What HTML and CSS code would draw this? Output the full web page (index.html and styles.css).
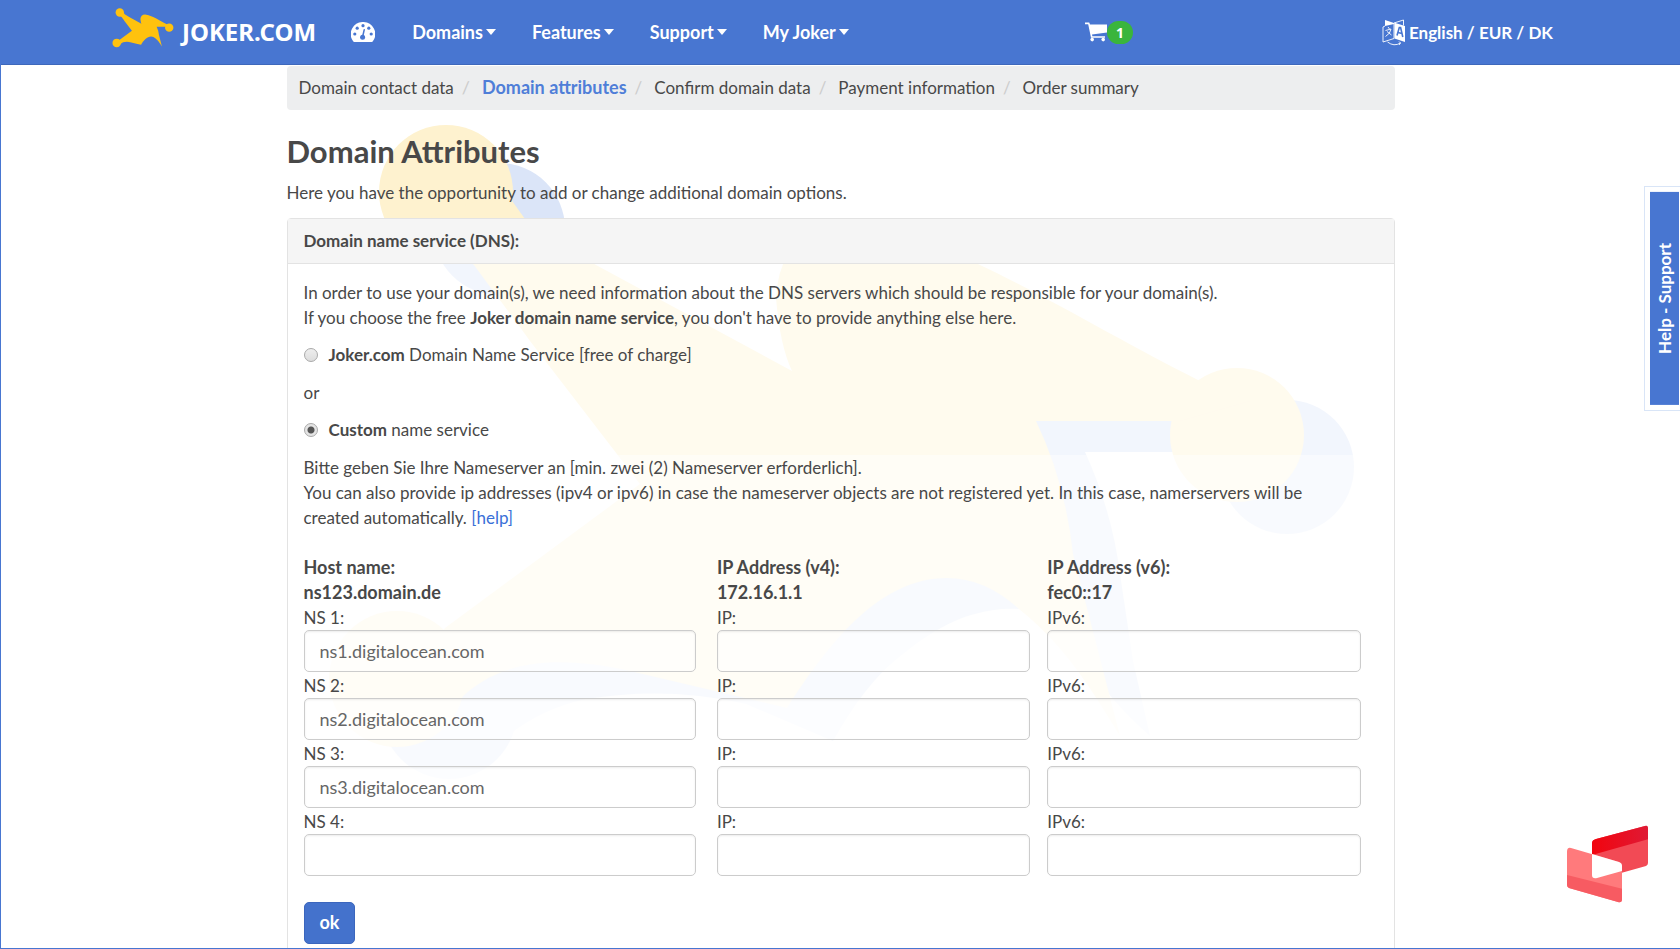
FILE: index.html
```html
<!DOCTYPE html>
<html lang="en">
<head>
<meta charset="utf-8">
<title>Joker.com - Domain Attributes</title>
<link rel="stylesheet" href="styles.css">
</head>
<body>
<div class="frame">
  <header class="navbar">
    <nav class="nav-left" aria-label="Main">
      <a class="brand" href="#">
        <svg class="brand-hat" viewBox="325 120 985 640" aria-hidden="true">
          <defs>
            <g id="hat">
              <circle cx="446" cy="191" r="67"/>
              <circle cx="397" cy="678" r="68"/>
              <circle cx="1237" cy="434" r="67"/>
              <path d="M474 264C500 300 520 325 530 340L640 483L445 627L400 700L461 697C492 667 540 650 630 670Q715 690 787 707C830 640 880 577 947 577Q985 577 1019 608Q1060 640 1097 698L1120 735L1073 553Q1065 480 1036 420L1180 420L1250 400L1198 379C1130 345 1040 292 980 264Q900 222 850 222Q780 225 776 297Q780 345 792 370L596 264L525 218L505 190L420 220Z"/>
            </g>
          </defs>
          <use href="#hat" fill="#ffc20e"/>
        </svg>
        <span class="brand-name">JOKER.COM</span>
      </a>
      <a class="dash" href="#" aria-label="Dashboard">
        <svg class="dash-icon" viewBox="0 0 24 20" aria-hidden="true">
          <path fill="#fff" d="M12 0A12 12 0 0 0 2 19Q2.400 20 3.400 20H20.600Q21.600 20 22 19A12 12 0 0 0 12 0Z"/>
          <g fill="#4876d1"><circle cx="3.800" cy="12" r="1.600"/><circle cx="6.200" cy="6.200" r="1.600"/><circle cx="12" cy="3.700" r="1.600"/><circle cx="17.800" cy="6.200" r="1.600"/><circle cx="20.200" cy="12" r="1.600"/><circle cx="11.600" cy="15.200" r="2.500"/></g>
          <path d="M11.800 14L13.200 7.800" stroke="#4876d1" stroke-width="1.500" stroke-linecap="round"/>
        </svg>
      </a>
      <a class="nav-link" href="#">Domains<span class="caret"></span></a>
      <a class="nav-link" href="#">Features<span class="caret"></span></a>
      <a class="nav-link" href="#">Support<span class="caret"></span></a>
      <a class="nav-link" href="#">My Joker<span class="caret"></span></a>
    </nav>
    <div class="nav-right">
      <a class="cart" href="#" aria-label="Cart, 1 item">
        <svg class="cart-icon" viewBox="0 0 22 20" aria-hidden="true">
          <path fill="#fff" d="M0 .5H4.200L5 2.500H22V10.500L7 12.600L7.400 14.200H20V15.800H6L3.200 2.200H0Z"/>
          <circle cx="7.200" cy="17.600" r="1.800" fill="#fff"/><circle cx="18.200" cy="17.600" r="1.800" fill="#fff"/>
        </svg>
        <span class="badge">1</span>
      </a>
      <a class="locale" href="#">
        <svg class="locale-icon" viewBox="0 0 24 27" aria-hidden="true">
          <path fill="#fff" d="M3 1L12 4L12 5L3 7ZM12.500 3.800L23 7V23L12.500 19.500Z"/>
          <g fill="none" stroke="#fff" stroke-width=".9">
            <path d="M3 7L1 8V23L12 19.500V4M12 4L21.500 1V6.500M6 8L7.500 10M3.500 11.500L9 10Q8.500 14.500 3.500 17.500M5 12.500L9.500 16"/>
            <path d="M5.500 23Q12 28 18.500 24M18.500 24L17 22.500M18.500 24L17 26"/>
          </g>
          <path d="M15 16.500L17.300 8.500H18.600L20.800 18M15.800 13.500L20 14.500" fill="none" stroke="#4876d1" stroke-width="1.600"/>
        </svg>
        English / EUR / DK
      </a>
    </div>
  </header>

  <main class="page">
    <svg class="watermark" viewBox="325 120 1035 665" aria-hidden="true">
      <g class="wm-blue">
        <circle cx="499" cy="228" r="66"/>
        <circle cx="449" cy="710" r="68"/>
        <circle cx="1287" cy="466" r="67"/>
        <path d="M1030 420H1190V451H1085Q1112 510 1120 573L1133 660L1150 735Q1110 700 1085 660Z"/>
        <path d="M440 700C480 650 540 630 630 655L780 690C830 620 870 570 947 570Q985 570 1019 608C960 605 920 640 898 657Q865 683 833 740L746 703C688 690 639 690 586 698Q540 708 505 737Q490 765 465 776Z"/>
      </g>
      <use class="wm-yellow" href="#hat"/>
    </svg>

    <ol class="steps">
      <li>Domain contact data</li>
      <li class="current" aria-current="step">Domain attributes</li>
      <li>Confirm domain data</li>
      <li>Payment information</li>
      <li>Order summary</li>
    </ol>

    <h1>Domain Attributes</h1>
    <p class="lead">Here you have the opportunity to add or change additional domain options.</p>

    <form class="panel">
      <h2 class="panel-title">Domain name service (DNS):</h2>
      <div class="intro">
        <p>In order to use your domain(s), we need information about the DNS servers which should be responsible for your domain(s).<br>If you choose the free <b>Joker domain name service</b>, you don't have to provide anything else here.</p>
        <label class="choice"><input type="radio" name="dns"><span><b>Joker.com</b> Domain Name Service [free of charge]</span></label>
        <p>or</p>
        <label class="choice"><input type="radio" name="dns" checked><span><b>Custom</b> name service</span></label>
      </div>
      <div class="custom">
        <p class="note">Bitte geben Sie Ihre Nameserver an [min. zwei (2) Nameserver erforderlich].<br>You can also provide ip addresses (ipv4 or ipv6) in case the nameserver objects are not registered yet. In this case, namerservers will be created automatically. <a href="#">[help]</a></p>
        <div class="servers">
          <div class="col col-host">
            <b>Host name:</b><b>ns123.domain.de</b>
            <label for="h1">NS 1:</label><input id="h1" type="text" value="ns1.digitalocean.com">
            <label for="h2">NS 2:</label><input id="h2" type="text" value="ns2.digitalocean.com">
            <label for="h3">NS 3:</label><input id="h3" type="text" value="ns3.digitalocean.com">
            <label for="h4">NS 4:</label><input id="h4" type="text">
          </div>
          <div class="col">
            <b>IP Address (v4):</b><b>172.16.1.1</b>
            <label for="a1">IP:</label><input id="a1" type="text">
            <label for="a2">IP:</label><input id="a2" type="text">
            <label for="a3">IP:</label><input id="a3" type="text">
            <label for="a4">IP:</label><input id="a4" type="text">
          </div>
          <div class="col">
            <b>IP Address (v6):</b><b>fec0::17</b>
            <label for="b1">IPv6:</label><input id="b1" type="text">
            <label for="b2">IPv6:</label><input id="b2" type="text">
            <label for="b3">IPv6:</label><input id="b3" type="text">
            <label for="b4">IPv6:</label><input id="b4" type="text">
          </div>
        </div>
        <button class="ok" type="button">ok</button>
      </div>
    </form>
  </main>
</div>

<div class="help-tab"><a href="#">Help - Support</a></div>

<svg class="corner-mark" viewBox="0 0 82 78" aria-hidden="true">
  <defs>
    <clipPath id="back"><path d="M29 14L78 1Q81 0 81 4V38Q81 40 79 41L54 48L25 60V18Q25 15 29 14Z"/></clipPath>
    <clipPath id="front"><path d="M4 23L52 37Q55 38 55 41V74Q55 78 51 77L2 63Q0 62 0 60V27Q0 22 4 23Z"/></clipPath>
    <linearGradient id="red"><stop offset=".3" stop-color="#f2040e"/><stop offset="1" stop-color="#df1a35"/></linearGradient>
  </defs>
  <g clip-path="url(#back)"><rect width="82" height="78" fill="#f24a55"/><path fill="url(#red)" d="M0 0H82V14L25 30H0Z"/></g>
  <g clip-path="url(#front)"><rect width="82" height="78" fill="#ff7a7c"/><path fill="#f75b62" d="M0 50L56 64V78H0Z"/></g>
  <path fill="#fff" d="M25 29L52 37Q55 38 55 41V46L30 53Q25 54 25 50Z"/>
</svg>
</body>
</html>
```
FILE: styles.css
```css
* { box-sizing: border-box; }

body {
  margin: 0;
  font: 17px/25px Lato, sans-serif;
  color: #484848;
  background: #fff;
}

.frame {
  height: 100vh;
  overflow: hidden;
  border: solid #4876d1;
  border-width: 0 0 1px 1px;
}

p, h1, h2, ol { margin: 0; padding: 0; }

/* navigation */
.navbar {
  display: grid;
  grid-template-columns: 973fr 468fr;
  align-items: center;
  height: 65px;
  padding: 0 127px 0 111px;
  background: #4876d1;
  border-bottom: 1px solid #3e68bb;
}
.navbar a { color: #fff; text-decoration: none; font-weight: 700; }
.nav-left { display: flex; align-items: center; }
.brand { display: flex; align-items: center; gap: 8px; }
.brand-hat { width: 62px; height: 40px; margin-bottom: 9px; }
.brand-name { font: 700 24px/32px "Noto Sans", sans-serif; }
.dash { display: flex; margin: 0 37px 0 35px; }
.dash-icon { width: 24px; height: 20px; }
.nav-link { display: flex; align-items: center; gap: 3px; margin-right: 36px; font-size: 18px; }
.caret { border: 5px solid transparent; border-top: 6px solid #fff; border-bottom: 0; }
.nav-right { display: flex; justify-content: space-between; align-items: center; }
.cart { display: flex; align-items: center; }
.cart-icon { width: 22px; height: 20px; }
.badge {
  padding: 0 9px;
  border-radius: 12px;
  background: #3ab53c;
  font: 700 14px/23px "Open Sans", sans-serif;
}
.locale { display: flex; align-items: center; gap: 3px; }
.locale-icon { width: 24px; height: 27px; }

/* page */
.page { position: relative; max-width: 1108px; margin: 0 auto; padding-top: 1px; }
.watermark { position: absolute; z-index: -1; left: 38px; top: 56px; width: 1035px; height: 665px; }
.wm-yellow { fill: #fef2cf; }
.wm-blue { fill: #dbe5f8; }

.steps {
  display: flex;
  padding: 9px 12px 10px;
  border-radius: 4px;
  background: #edeeef;
  list-style: none;
}
.steps li + li::before { content: "/"; padding: 0 12px 0 8px; color: #ccc; font-weight: 400; }
.steps .current { color: #4f7ed8; font-size: 18px; font-weight: 700; }

h1 { margin-top: 23px; font-size: 31px; line-height: 36px; }
.lead { margin: 11px 0 13px; }

.panel {
  border: 1px solid #e3e3e3;
  border-radius: 4px;
  background: rgba(255, 255, 255, .65);
}
.panel-title {
  padding: 9px 16px 10px;
  border-bottom: 1px solid #e3e3e3;
  background: #f5f5f5;
  font-size: 17px;
  line-height: 25px;
}
.intro { display: grid; gap: 12px; padding: 16px 16px 12px; }
.choice { display: flex; align-items: center; gap: 11px; margin-bottom: 1px; }
.choice input {
  appearance: none;
  width: 14px;
  height: 14px;
  margin: 0;
  border: 1px solid #a9a9a9;
  border-radius: 50%;
  background: linear-gradient(#eee, #ddd);
}
.choice input:checked { background: radial-gradient(circle, #555 3px, #e4e4e4 4px); }

.custom { padding: 0 33px 20px 16px; background: rgba(255, 255, 255, .45); }
.note { padding-right: 16px; }
.note a { color: #3a6fd8; text-decoration: none; }
.servers { display: grid; grid-template-columns: 396fr 313fr 313fr; gap: 17px; margin: 25px 0; }
.col { display: flex; flex-direction: column; }
.col b { font-size: 18px; }
.col-host { padding-right: 4px; }
.col input {
  width: 100%;
  height: 42px;
  margin-bottom: 1px;
  padding: 0 15px;
  border: 1px solid #ccc;
  border-radius: 5px;
  background: rgba(255, 255, 255, .6);
  box-shadow: inset 0 1px 2px rgba(0, 0, 0, .08);
  font: 18px/25px Lato, sans-serif;
  color: #666;
}
.ok {
  padding: 7px 15px 8px;
  border: 1px solid #3b66bd;
  border-radius: 5px;
  background: #4472cc;
  color: #fff;
  font: 700 18px/25px Lato, sans-serif;
}

/* fixed overlays */
.help-tab {
  position: fixed;
  right: 0;
  top: 186px;
  padding: 5px 1px 5px 5px;
  border: 1px solid #d9e5f7;
  border-right: 0;
  background: #fff;
}
.help-tab a {
  display: block;
  padding: 51px 2px;
  background: #4876d1;
  color: #fff;
  font-weight: 700;
  text-decoration: none;
  writing-mode: vertical-rl;
  transform: rotate(180deg);
}
.corner-mark { position: fixed; right: 31px; bottom: 46px; width: 82px; height: 78px; }
```
